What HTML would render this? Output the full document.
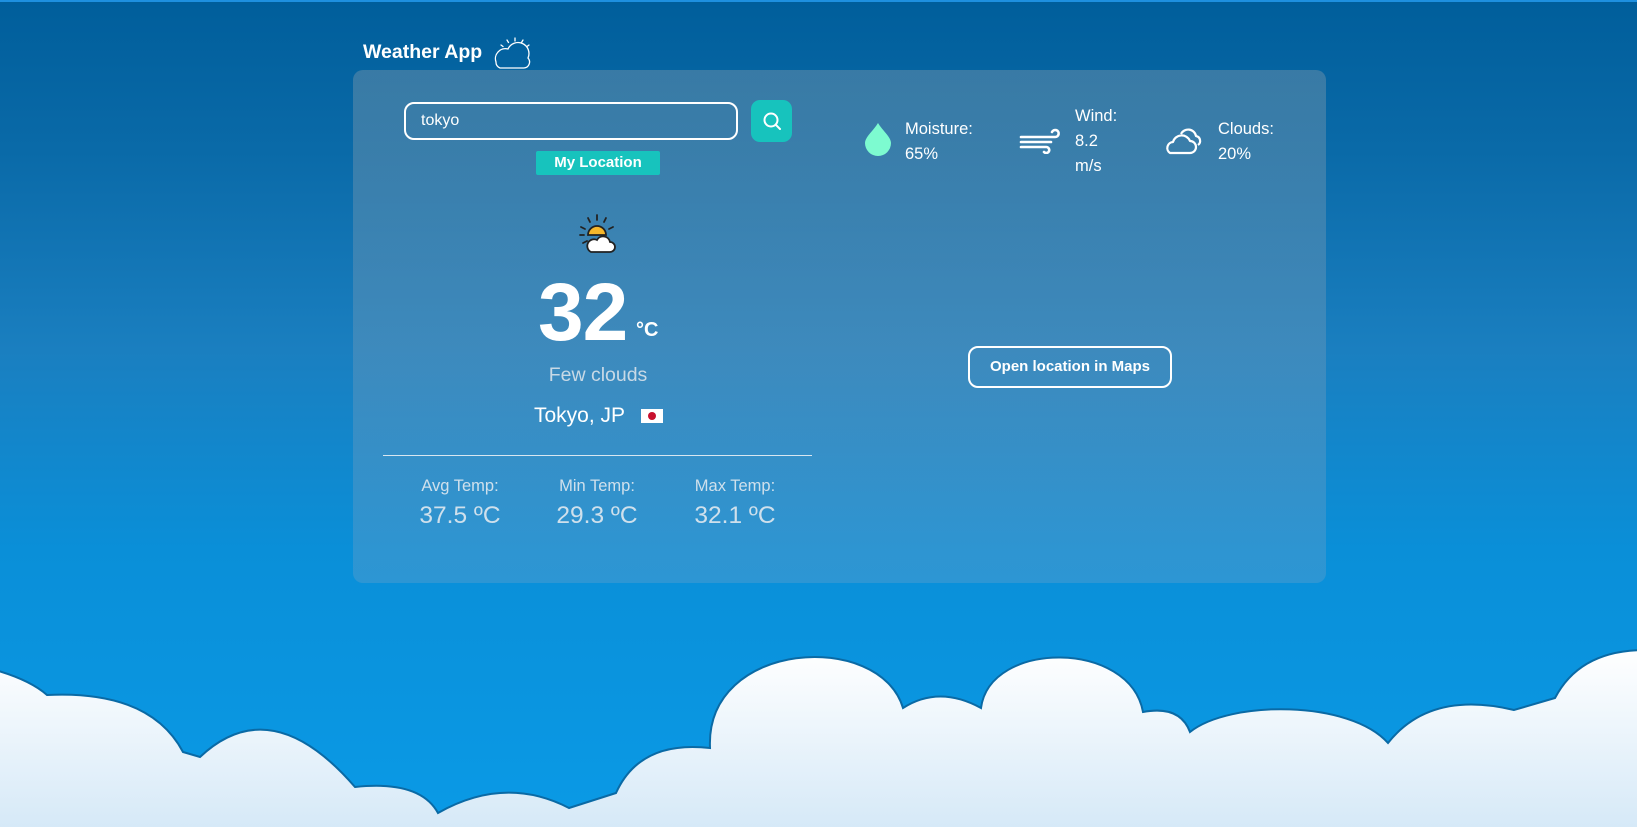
<!DOCTYPE html>
<html><head><meta charset="utf-8"><style>
*{margin:0;padding:0;box-sizing:border-box}
body{width:1637px;height:827px;overflow:hidden;font-family:"Liberation Sans",Arial,sans-serif;color:#fff;position:relative;
background:linear-gradient(180deg,#005e9b 0px,#0a6aa8 150px,#1a7fc0 350px,#0a8fd8 550px,#0a9ae6 827px)}
.abs{position:absolute}
.card{left:353px;top:70px;width:973px;height:513px;border-radius:10px;background:linear-gradient(180deg,rgba(120,150,170,0.45),rgba(110,160,200,0.35))}
.t{white-space:nowrap}
</style></head><body>
<div class="abs" style="left:0;top:0;width:1637px;height:2px;background:#1e90e0"></div>
<div class="abs t" style="left:363px;top:41px;font-size:19.5px;font-weight:bold">Weather App</div>
<svg class="abs" style="left:494px;top:36px" width="38" height="34" viewBox="0 0 38 34" fill="none" stroke="#fff" stroke-width="1.3" stroke-linecap="round">
<path d="M21 2v3M13 4l1.5 2.5M29 4l-1.5 2.5M7 9l2 1.5M35 9l-2 1.5"/>
<path d="M6 32h24a6 6 0 0 0 4-10A10 10 0 0 0 14 13 10 10 0 0 0 2 26a6 6 0 0 0 4 6z"/></svg>
<div class="abs card"></div>
<div class="abs" style="left:404px;top:102px;width:334px;height:38px;border:2px solid #fff;border-radius:10px"></div>
<div class="abs t" style="left:421px;top:112px;font-size:16px">tokyo</div>
<div class="abs" style="left:751px;top:100px;width:41px;height:42px;background:#17c3bd;border-radius:9px"></div>
<svg class="abs" style="left:761px;top:110px" width="22" height="22" viewBox="0 0 22 22" fill="none" stroke="#fff" stroke-width="2" stroke-linecap="round"><circle cx="10" cy="10" r="6.5"/><path d="M15 15l4 4"/></svg>
<div class="abs t" style="left:536px;top:151px;width:124px;height:24px;background:#17c3bd;border-radius:2px;font-size:15px;font-weight:bold;text-align:center;line-height:24px">My Location</div>
<svg class="abs" style="left:577px;top:213px" width="42" height="42" viewBox="0 0 42 42" stroke="#222" stroke-width="1.8" stroke-linecap="round">
<path d="M20 2v5M11 5l2 4M29 5l-2 4M4 14l4 2M36 14l-4 2M3 22h4M6 30l4-2" fill="none"/>
<path d="M11 22a9 9 0 0 1 18 0z" fill="#f6b72b"/>
<path d="M14 39h19a5 5 0 0 0 0-10 7 7 0 0 0-13-2 6 6 0 0 0-6 12z" fill="#fff"/></svg>
<div class="abs t" style="left:538px;top:266px;font-size:82px;font-weight:bold;letter-spacing:-1px">32</div>
<div class="abs t" style="left:636px;top:319px;font-size:20px;font-weight:bold">°C</div>
<div class="abs t" style="left:498px;top:364px;width:200px;text-align:center;font-size:19.5px;color:#c8d9e6">Few clouds</div>
<div class="abs t" style="left:534px;top:404px;font-size:21px">Tokyo, JP</div>
<div class="abs" style="left:641px;top:409px;width:22px;height:14px;background:#fff"><div style="position:absolute;left:7px;top:3px;width:8px;height:8px;border-radius:50%;background:#c8102e"></div></div>
<div class="abs" style="left:383px;top:455px;width:429px;height:1px;background:#d8e6f0"></div>
<div class="abs t" style="left:400px;top:477px;width:120px;text-align:center;font-size:16.5px;color:#cfe0ec">Avg Temp:</div>
<div class="abs t" style="left:537px;top:477px;width:120px;text-align:center;font-size:16.5px;color:#cfe0ec">Min Temp:</div>
<div class="abs t" style="left:675px;top:477px;width:120px;text-align:center;font-size:16.5px;color:#cfe0ec">Max Temp:</div>
<div class="abs t" style="left:390px;top:502px;width:140px;text-align:center;font-size:24.5px;color:#cfe0ec">37.5 ºC</div>
<div class="abs t" style="left:527px;top:502px;width:140px;text-align:center;font-size:24.5px;color:#cfe0ec">29.3 ºC</div>
<div class="abs t" style="left:665px;top:502px;width:140px;text-align:center;font-size:24.5px;color:#cfe0ec">32.1 ºC</div>
<svg class="abs" style="left:864px;top:122px" width="28" height="34" viewBox="0 0 28 34"><path d="M14 1C10 8 1 15 1 21a13 13 0 0 0 26 0C27 15 18 8 14 1z" fill="#7dfbd0"/></svg>
<div class="abs t" style="left:905px;top:117px;font-size:16.5px;line-height:25px">Moisture:<br>65%</div>
<svg class="abs" style="left:1019px;top:128px" width="42" height="26" viewBox="0 0 42 26" fill="none" stroke="#fff" stroke-width="2.6" stroke-linecap="round">
<path d="M2 9h34a3.5 3.5 0 1 0-3-5"/><path d="M2 14h30"/><path d="M2 19h25a3 3 0 1 1-2 5"/></svg>
<div class="abs t" style="left:1075px;top:104px;font-size:16.5px;line-height:25px">Wind:<br>8.2<br>m/s</div>
<svg class="abs" style="left:1163px;top:125px" width="40" height="30" viewBox="0 0 40 30" fill="none" stroke="#fff" stroke-width="2.2" stroke-linejoin="round">
<path d="M7 28h20a6 6 0 0 0 0-12 9 9 0 0 0-17 1 6 6 0 0 0-3 11z"/><path d="M18 9a8 8 0 0 1 15 2 5 5 0 0 1 2 9"/></svg>
<div class="abs t" style="left:1218px;top:117px;font-size:16.5px;line-height:25px">Clouds:<br>20%</div>
<div class="abs t" style="left:968px;top:346px;width:204px;height:42px;border:2px solid #fff;border-radius:10px;font-size:15px;font-weight:bold;text-align:center;line-height:38px">Open location in Maps</div>
<svg class="abs" style="left:0;top:0" width="1637" height="827" viewBox="0 0 1637 827">
<defs><linearGradient id="g" x1="0" y1="0" x2="0" y2="1"><stop offset="0" stop-color="#ffffff"/><stop offset="1" stop-color="#d4e8f7"/></linearGradient></defs>
<path d="M-5,670 Q30,680 47,695 Q150,690 183,752 L200,757 Q271,690 355,787 Q420,780 438,813 Q505,775 569,808 L616,793 Q640,740 710,748 C705,640 880,630 903,708 Q939,685 981,708 C990,640 1130,640 1143,712 Q1180,705 1190,732 C1230,700 1350,700 1388,743 Q1430,690 1514,710 L1555,698 Q1580,650 1645,650 L1645,835 L-5,835 Z" fill="url(#g)" stroke="#0a6aa5" stroke-width="2"/>
</svg>
</body></html>
